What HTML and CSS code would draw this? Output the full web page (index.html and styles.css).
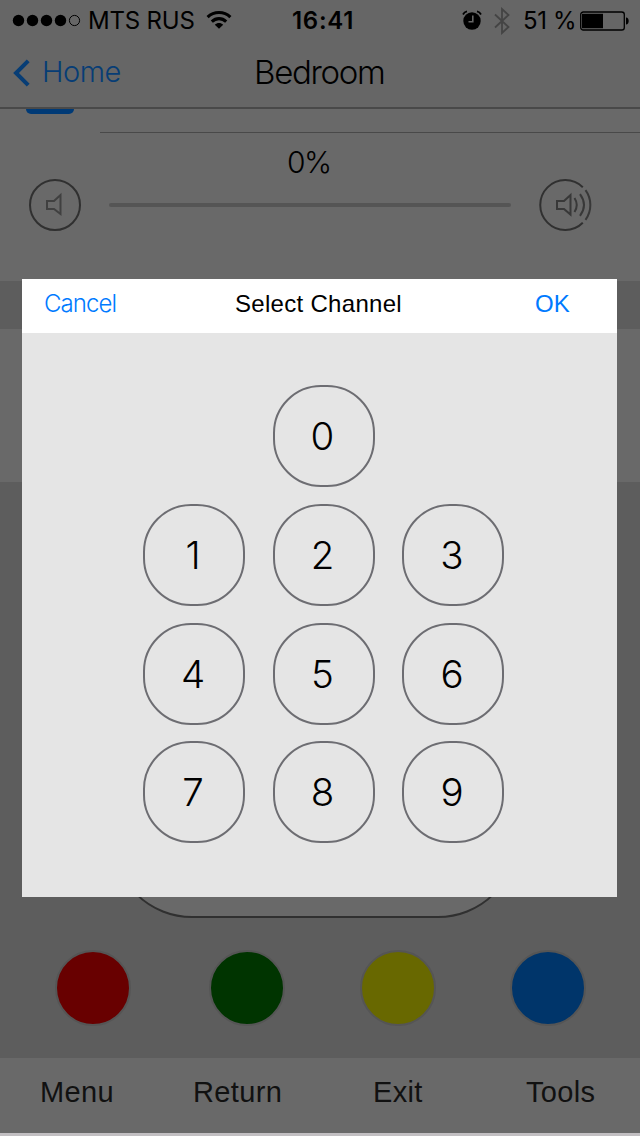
FILE: index.html
```html
<!DOCTYPE html>
<html lang="en">
<head>
<meta charset="utf-8">
<title>Bedroom</title>
<link rel="stylesheet" href="styles.css">
</head>
<body>
<div class="screen">
  <header class="top">
    <div class="status">
      <svg class="signal" width="70" height="14" viewBox="0 0 70 14"><g fill="#000"><circle cx="6.5" cy="6.5" r="5.7"/><circle cx="20.5" cy="6.5" r="5.7"/><circle cx="34.5" cy="6.5" r="5.7"/><circle cx="48.5" cy="6.5" r="5.7"/></g><circle cx="62.5" cy="6.5" r="5.1" fill="none" stroke="#000" stroke-width="1"/></svg>
      <span class="carrier">MTS RUS</span>
      <svg class="wifi" width="26" height="20" viewBox="0 0 26 20" fill="none" stroke="#000" stroke-width="3.1"><path d="M1.6 7.2C8 1 18 1 24.4 7.2"/><path d="M5.8 11.6C10 7.6 16 7.6 20.2 11.6"/><path d="M13 18.7L8.8 14.7C11.2 12.5 14.8 12.5 17.2 14.7Z" fill="#000" stroke="none"/></svg>
      <span class="time">16:41</span>
      <svg class="alarm" width="20" height="20" viewBox="0 0 20 20"><circle cx="10" cy="11" r="8.7" fill="#000"/><path d="M1 4.5C1.8 2.8 3.2 1.7 5 1.4M19 4.5C18.2 2.8 16.8 1.7 15 1.4" fill="none" stroke="#000" stroke-width="1.8"/><path d="M10.8 5.5V11.8H6.5" fill="none" stroke="#666" stroke-width="1.6"/></svg>
      <svg class="bluetooth" width="18" height="28" viewBox="0 0 18 28" fill="none" stroke="#444" stroke-width="1.8"><path d="M2 7.5L15.5 20L9 26V2L15.5 8L2 20.5"/></svg>
      <span class="percent">51 %</span>
      <svg class="battery" width="50" height="20" viewBox="0 0 50 20"><rect x=".7" y="1" width="43.6" height="18" rx="2.6" fill="none" stroke="#000" stroke-width="1.3"/><path d="M2 2.8H23V17.2H2Z"/><path d="M46 6.5C49.6 6.5 49.6 13.5 46 13.5Z"/></svg>
    </div>
    <nav class="nav">
      <svg class="back" width="18" height="28" viewBox="0 0 18 28" fill="none" stroke="#073d75" stroke-width="4"><path d="M15.2 1.8L3 14L15.2 26.2"/></svg>
      <span class="home">Home</span>
      <h1 class="title">Bedroom</h1>
    </nav>
  </header>
  <section class="volume">
    <div class="tab"></div>
    <div class="divider"></div>
    <div class="level">0%</div>
    <div class="slider">
      <svg width="52" height="52" viewBox="0 0 52 52" fill="none" stroke-width="2"><circle cx="26" cy="26" r="25" stroke="#303030"/><path d="M18 22H25L31.5 16V35L25 30H18Z" stroke="#404040"/></svg>
      <div class="track"></div>
      <svg width="54" height="52" viewBox="0 0 54 52" fill="none" stroke-width="2"><path d="M43.8 8.2A25 25 0 1 0 43.8 43.8" stroke="#303030"/><path d="M46.5 11.2A25 25 0 0 1 46.5 40.8" stroke="#383838"/><path d="M18 22H25L31.5 16V35.5L25 30H18Z" stroke="#383838"/><path d="M35.5 19Q40 26 35.5 33M41 15.2Q49 26 41 36.8" stroke="#383838"/></svg>
    </div>
  </section>
  <section class="band"></section>
  <section class="remote">
    <div class="pad"></div>
    <div class="colours"><i class="dot red"></i><i class="dot green"></i><i class="dot yellow"></i><i class="dot blue"></i></div>
  </section>
  <footer class="menu"><span>Menu</span><span>Return</span><span>Exit</span><span>Tools</span></footer>
  <div class="dialog">
    <div class="dialog-head"><span class="cancel">Cancel</span><span class="heading">Select Channel</span><span class="ok">OK</span></div>
    <div class="keys">
      <span class="key zero">0</span>
      <span class="key">1</span><span class="key">2</span><span class="key">3</span>
      <span class="key">4</span><span class="key">5</span><span class="key">6</span>
      <span class="key">7</span><span class="key">8</span><span class="key">9</span>
    </div>
  </div>
</div>
</body>
</html>
```
FILE: styles.css
```css
* { box-sizing: border-box; }
body { margin: 0; font-family: "Liberation Sans", Arial, sans-serif; }
svg { display: block; }
span { white-space: nowrap; }
.screen {
  position: relative;
  width: 640px;
  height: 1136px;
  overflow: hidden;
  display: flex;
  flex-direction: column;
  background: #5d5d5d;
  border-bottom: 3px solid #c2bfc2;
}
.top { height: 109px; background: #666; border-bottom: 2px solid #494949; }
.status {
  height: 41px;
  padding-left: 12px;
  display: grid;
  grid-template-columns: 76px 118px 86px 170px 31px 30px 57px 50px;
  align-items: center;
  font: 400 24px/41px Inter, sans-serif;
}
.carrier { letter-spacing: -.2px; }
.wifi { margin-top: -1px; }
.alarm { margin-top: -2px; }
.time { font-weight: 600; letter-spacing: .7px; }
.percent { letter-spacing: -.4px; }
.nav {
  height: 64px;
  padding-left: 13px;
  display: grid;
  grid-template-columns: 29px 213px 1fr;
  align-items: center;
  font-family: Inter, sans-serif;
  font-weight: 300;
}
.home { font-size: 29px; line-height: 36px; margin-top: -2px; letter-spacing: -.5px; color: #073d75; }
.title { margin: -2px 0 0 -1px; font-size: 33px; line-height: 40px; font-weight: 300; letter-spacing: -1.3px; }
.volume { height: 172px; background: #696969; }
.tab { width: 48px; height: 5px; margin-left: 25.5px; background: #003a76; border-radius: 0 0 7px 7px; }
.divider { height: 1px; margin: 18px 0 0 100px; background: #494949; }
.level { margin-left: 287px; padding-top: 9px; height: 46px; font: 300 30px/40px Inter, sans-serif; letter-spacing: -1.6px; }
.slider { display: flex; align-items: center; padding-left: 29px; }
.track { width: 402px; height: 4px; margin: 0 28px; border-radius: 2px; background: #555; }
.band { height: 153px; margin-top: 48px; background: #696969; }
.remote { height: 576px; padding-top: 236px; }
.pad { width: 406px; height: 200px; margin-left: 112px; border: 2px solid #303030; border-radius: 80px; background: #696969; }
.colours { display: grid; grid-template-columns: 154px 151px 150px 76px; padding: 32px 0 0 55px; }
.dot { width: 76px; height: 76px; border: 2px solid #555; border-radius: 50%; }
.red { background: #680000; }
.green { background: #003400; }
.yellow { background: #686800; }
.blue { background: #00356a; }
.menu {
  height: 75px;
  padding-left: 40px;
  display: grid;
  grid-template-columns: 153px 180px 153px 1fr;
  background: #696969;
  color: #111;
  font-size: 29px;
  line-height: 68px;
  letter-spacing: .35px;
}
.dialog { position: absolute; left: 22px; top: 279px; width: 595px; height: 618px; background: #e5e5e5; }
.dialog-head {
  height: 54px;
  padding-left: 22px;
  display: grid;
  grid-template-columns: 191px 300px 1fr;
  background: #fff;
  font-size: 24px;
  line-height: 50px;
}
.cancel { font-family: Inter, sans-serif; font-weight: 300; letter-spacing: -.9px; color: #007aff; }
.heading { letter-spacing: .3px; }
.ok { color: #007aff; }
.keys {
  display: grid;
  grid-template-columns: repeat(3, 102px);
  grid-auto-rows: 102px;
  gap: 16.8px 27.5px;
  padding: 52px 0 0 121px;
}
.key {
  border: 2px solid #6d6d72;
  border-radius: 48px;
  padding-right: 2px;
  text-align: center;
  font: 300 38.5px/98px Inter, sans-serif;
}
.zero { grid-column: 2; }
.zero + .key { grid-column: 1; }
```
